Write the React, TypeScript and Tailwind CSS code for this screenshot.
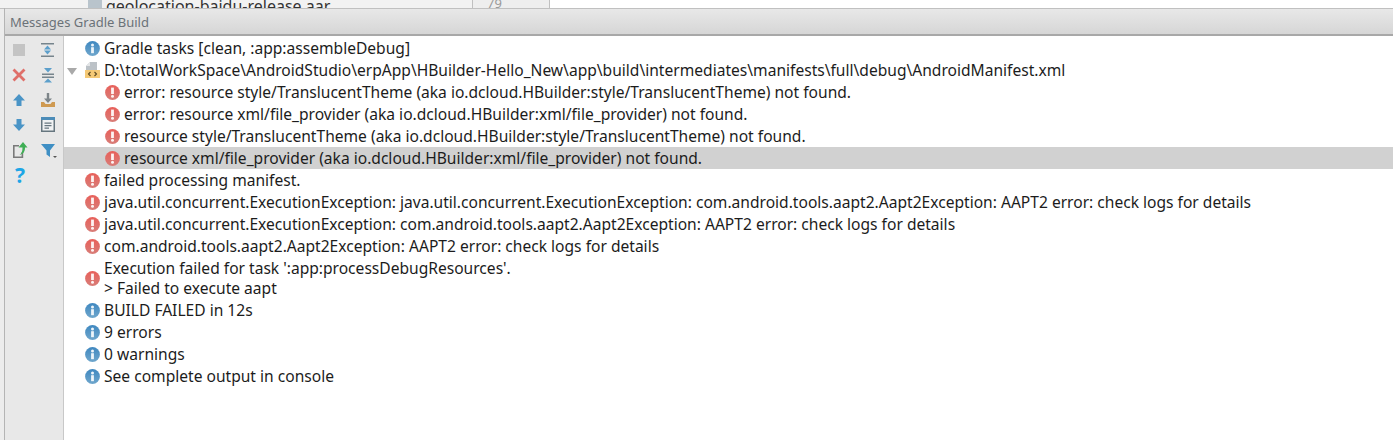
import type { ReactNode } from "react";

function InfoIcon() {
    return (
        <svg width="15" height="15" viewBox="0 0 15 15" className="shrink-0">
            <defs>
                <linearGradient id="info-fill" x1="0" y1="0" x2="0" y2="1">
                    <stop offset="0" stopColor="#3f88c0" />
                    <stop offset="1" stopColor="#6fa6cc" />
                </linearGradient>
            </defs>
            <circle cx="7.5" cy="7.5" r="7.4" fill="url(#info-fill)" />
            <circle cx="7.5" cy="3.9" r="1.5" fill="#eef5fa" />
            <rect x="6.1" y="6.2" width="2.8" height="6" fill="#eef5fa" />
        </svg>
    );
}

function ErrorIcon() {
    return (
        <svg width="15" height="15" viewBox="0 0 15 15" className="shrink-0">
            <defs>
                <linearGradient id="error-fill" x1="0" y1="0" x2="0" y2="1">
                    <stop offset="0" stopColor="#e8605a" />
                    <stop offset="1" stopColor="#d87d78" />
                </linearGradient>
            </defs>
            <circle cx="7.5" cy="7.5" r="7.4" fill="url(#error-fill)" />
            <rect x="6.1" y="2.6" width="2.8" height="6.4" fill="#fdf3f2" />
            <circle cx="7.5" cy="11.2" r="1.5" fill="#fdf3f2" />
        </svg>
    );
}

function XmlIcon() {
    return (
        <svg width="15" height="16" viewBox="0 0 15 16" className="shrink-0">
            <path d="M5 0h7v8H1V4z" fill="#bcc2c7" />
            <path d="M1 4h4V0z" fill="#e3e5e7" />
            <rect x="0" y="8" width="15" height="8" fill="#f5c976" />
            <path d="M5.5 10L3.5 12L5.5 14M9.500 10L11.500 12L9.500 14" stroke="#5c4a22" strokeWidth="1.1" fill="none" />
        </svg>
    );
}

function ToolIcon({ children }: { children: ReactNode }) {
    return (
        <svg width="16" height="16" viewBox="0 0 16 16" className="mt-[5px] overflow-visible">
            {children}
        </svg>
    );
}

const tools: ReactNode[] = [
    <rect key="stop" x="1" y="2" width="12" height="12" fill="#c4c4c4" />,
    <g key="expand">
        <path d="M1 1h13v1.500H1zM1 13.500h13V15H1z" fill="#76848c" />
        <path d="M7.500 3.500L11 7.500H4zM7.500 12.500L4 8.500h7z" fill="#5c9fcb" />
    </g>,
    <path key="close" d="M2.500 3.500L11.500 12.500M11.500 3.500L2.500 12.500" stroke="#df6f69" strokeWidth="2.800" strokeLinecap="square" />,
    <g key="collapse">
        <path d="M2 6.500h12V8H2zM2 9.500h12V11H2z" fill="#76848c" />
        <path d="M4 1h8L8 5.500zM8 11.500l4 4H4z" fill="#5c9fcb" />
    </g>,
    <path key="up" d="M7 2l6 6.500H9.500V14h-5V8.500H1z" fill="#4a94c6" />,
    <g key="download">
        <path d="M1 10h3l1.500 2h5l1.500-2h3v5H1z" fill="#cf9a52" />
        <path d="M6.800 1h2.400v5.500H12l-4 4.500-4-4.500h2.800z" fill="#7d8589" />
    </g>,
    <path key="down" d="M7 14L1 7.500h3.500V2h5v5.500H13z" fill="#4a94c6" />,
    <g key="autoscroll">
        <rect x="1.750" y="0.750" width="12.500" height="13.500" fill="#f0f2f3" stroke="#66767f" strokeWidth="1.500" />
        <rect x="1" y="0" width="14" height="3" fill="#4c8cb8" />
        <path d="M4.500 5.500h7v1.200h-7zM4.500 8h7v1.200h-7zM4.500 10.500h4.500v1.200H4.500z" fill="#66767f" />
    </g>,
    <g key="export">
        <path d="M1 3h6v1.600H2.600v9.800h7V10h1.600v6H1z" fill="#7a7a7a" />
        <path d="M11 0l4.500 5.500H13c0 4-1.500 6.500-5.500 7.500 2-1.500 3-3.500 3-7.500H6.500z" fill="#3fae55" />
    </g>,
    <g key="filter">
        <path d="M1 2h14L10 8.500V15L6.500 12.500V8.500z" fill="#3f8fc4" />
        <path d="M13 14h4l-2 2z" fill="#555" />
    </g>,
];

const messages: { kind: "info" | "error" | "xml"; text: ReactNode; depth?: number; selected?: boolean; tall?: boolean }[] = [
    { kind: "info", text: "Gradle tasks [clean, :app:assembleDebug]" },
    { kind: "xml", text: "D:\\totalWorkSpace\\AndroidStudio\\erpApp\\HBuilder-Hello_New\\app\\build\\intermediates\\manifests\\full\\debug\\AndroidManifest.xml" },
    { kind: "error", depth: 1, text: "error: resource style/TranslucentTheme (aka io.dcloud.HBuilder:style/TranslucentTheme) not found." },
    { kind: "error", depth: 1, text: "error: resource xml/file_provider (aka io.dcloud.HBuilder:xml/file_provider) not found." },
    { kind: "error", depth: 1, text: "resource style/TranslucentTheme (aka io.dcloud.HBuilder:style/TranslucentTheme) not found." },
    { kind: "error", depth: 1, selected: true, text: "resource xml/file_provider (aka io.dcloud.HBuilder:xml/file_provider) not found." },
    { kind: "error", text: "failed processing manifest." },
    { kind: "error", text: "java.util.concurrent.ExecutionException: java.util.concurrent.ExecutionException: com.android.tools.aapt2.Aapt2Exception: AAPT2 error: check logs for details" },
    { kind: "error", text: "java.util.concurrent.ExecutionException: com.android.tools.aapt2.Aapt2Exception: AAPT2 error: check logs for details" },
    { kind: "error", text: "com.android.tools.aapt2.Aapt2Exception: AAPT2 error: check logs for details" },
    { kind: "error", tall: true, text: <>Execution failed for task ':app:processDebugResources'.<br />&gt; Failed to execute aapt</> },
    { kind: "info", text: "BUILD FAILED in 12s" },
    { kind: "info", text: "9 errors" },
    { kind: "info", text: "0 warnings" },
    { kind: "info", text: "See complete output in console" },
];

export default function App() {
    return (
        <div className="w-[1393px] h-[440px] overflow-hidden bg-white flex flex-col font-['Noto_Sans',sans-serif] text-[15.59px] text-[#1c1c1c]">
            {/* editor strip cut off at the top */}
            <div className="h-[8px] shrink-0 flex overflow-hidden bg-[#f2f2f2]">
                <div className="w-[472px] h-[8px] pl-[88px] pt-[4px] flex items-start gap-[4px] leading-[4px] text-[16px] text-[#333] overflow-hidden">
                    <span className="w-[14px] h-[8px] bg-[#b9c4cc] shrink-0 mt-[-4px]" />
                    <span>geolocation-baidu-release.aar</span>
                </div>
                <div className="w-[78px] h-[8px] border-x border-[#c0c0c0] bg-[#eeeeee] text-[#9a9a9a] text-[13px] leading-[6px] pl-[14px] overflow-hidden">79</div>
                <div className="flex-1 bg-white" />
            </div>

            <div className="flex-1 flex min-h-0">
                <div className="w-[4px] shrink-0 bg-[#ececec] border-t border-[#c0c0c0]" />

                <div className="flex-1 flex flex-col min-w-0 border-l border-[#b4b4b4]">
                    {/* title bar */}
                    <div className="h-[28px] shrink-0 flex items-center pl-[5px] pt-[2px] text-[13px] text-[#6b7278] bg-gradient-to-b from-[#e8e8e8] to-[#d6d6d6] border-t border-[#c0c0c0] border-b-2 border-b-[#a8a8a8]">
                        Messages Gradle Build
                    </div>

                    <div className="flex-1 flex min-h-0">
                        {/* side toolbar */}
                        <div className="w-[59px] shrink-0 bg-[#e8e8e8] border-r border-[#c8c8c8] pl-[7px] pt-px">
                            <div className="grid grid-cols-[28px_16px] auto-rows-[25px] items-start">
                                {tools.map((t, i) => (
                                    <ToolIcon key={i}>{t}</ToolIcon>
                                ))}
                                <span className="text-[#1ea6e6] text-[21px] font-bold leading-none pl-[3px] mt-[3px]">?</span>
                            </div>
                        </div>

                        {/* message tree */}
                        <div className="flex-1 min-w-0 pt-px">
                            {messages.map((m, i) => (
                                <div
                                    key={i}
                                    className={`flex items-center gap-[4px] whitespace-nowrap relative ${m.tall ? "h-[42px] leading-[20px]" : "h-[22px] leading-[22px]"} ${m.selected ? "bg-[#d1d1d1]" : ""} ${m.depth ? "pl-[41px]" : "pl-[21px]"}`}
                                >
                                    {m.kind === "xml" && (
                                        <span className="absolute left-[3px] top-[9px] w-0 h-0 border-x-[5px] border-x-transparent border-t-[7px] border-t-[#a9a9a9]" />
                                    )}
                                    {m.kind === "info" && <InfoIcon />}
                                    {m.kind === "error" && <ErrorIcon />}
                                    {m.kind === "xml" && <XmlIcon />}
                                    <span>{m.text}</span>
                                </div>
                            ))}
                        </div>
                    </div>
                </div>
            </div>
        </div>
    );
}
